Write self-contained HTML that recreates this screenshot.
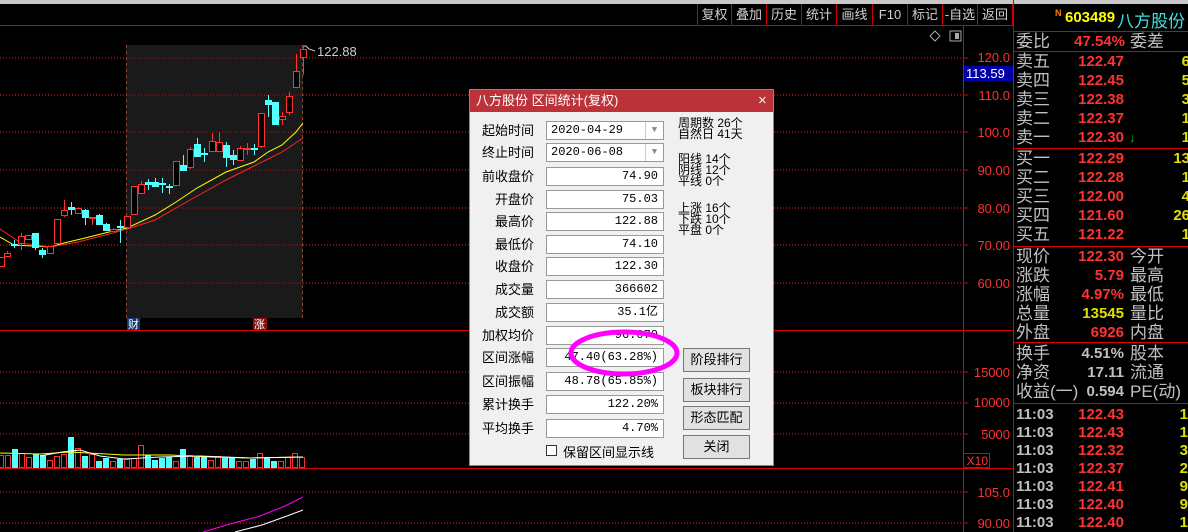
<!DOCTYPE html>
<html><head><meta charset="utf-8"><style>
*{margin:0;padding:0;box-sizing:border-box}
body{width:1188px;height:532px;background:#000;overflow:hidden;position:relative;font-family:"Liberation Sans","Noto Sans CJK SC",sans-serif;color:#c0c0c0}
.a{position:absolute;white-space:nowrap}
.tb{position:absolute;top:4px;height:21px;font-size:13px;line-height:21px;text-align:center;color:#d0d0d0;border-right:1px solid #c00}
.ax{position:absolute;font-size:13px;color:#ff3232;right:178px;text-align:right}
.rp{position:absolute;left:1016px;font-size:17px;line-height:19px;color:#c0c0c0}
.num{position:absolute;font-size:15px;font-weight:bold;line-height:19px;text-align:right;font-family:"Liberation Sans",sans-serif}
.hl{position:absolute;left:1014px;width:174px;height:1px;background:#d00}
.dlg{position:absolute;left:469px;top:89px;width:305px;height:377px;background:#f0f0f0;border:1px solid #888}
.ttl{position:absolute;left:0;top:0;width:303px;height:22px;background:#bb3239;color:#fff;font-size:13px;line-height:22px;padding-left:6px}
.lb{position:absolute;width:64px;text-align:right;font-size:13px;color:#000;left:0}
.in{position:absolute;left:76px;width:118px;height:19px;background:#fff;border:1px solid #999;font-size:12px;color:#000;text-align:right;padding-right:5px;line-height:17px;font-family:"Liberation Mono",monospace}
.bt{position:absolute;left:213px;width:67px;height:24px;background:#e1e1e1;border:1px solid #777;font-size:13px;color:#000;text-align:center;line-height:22px}
.st{position:absolute;font-size:12px;line-height:11px;color:#000}
</style></head><body>
<div class="a" style="left:0;top:0;width:1188px;height:4px;background:#c8c8c8"></div>
<div class="a" style="left:0;top:25px;width:1014px;height:1px;background:#c00"></div>
<div class="tb" style="left:697px;width:35px;border-left:1px solid #c00">复权</div>
<div class="tb" style="left:732px;width:35px">叠加</div>
<div class="tb" style="left:767px;width:35px">历史</div>
<div class="tb" style="left:802px;width:35px">统计</div>
<div class="tb" style="left:837px;width:36px">画线</div>
<div class="tb" style="left:873px;width:35px">F10</div>
<div class="tb" style="left:908px;width:35px">标记</div>
<div class="tb" style="left:943px;width:35px">-自选</div>
<div class="tb" style="left:978px;width:35px">返回</div>

<svg class="a" style="left:0;top:0" width="1014" height="532">
<rect x="126" y="45" width="177" height="273" fill="#1a1a1a"/>
<g stroke="#7a1010" stroke-dasharray="1,2" stroke-width="2">
<line x1="0" y1="58" x2="963" y2="58"/><line x1="0" y1="95" x2="963" y2="95"/><line x1="0" y1="132" x2="963" y2="132"/><line x1="0" y1="170" x2="963" y2="170"/><line x1="0" y1="208" x2="963" y2="208"/><line x1="0" y1="245" x2="963" y2="245"/><line x1="0" y1="283" x2="963" y2="283"/>
<line x1="0" y1="372" x2="963" y2="372"/><line x1="0" y1="403" x2="963" y2="403"/><line x1="0" y1="434" x2="963" y2="434"/><line x1="0" y1="492" x2="963" y2="492"/><line x1="0" y1="523" x2="963" y2="523"/>
</g>
<g stroke="#a04020" stroke-dasharray="3,3"><line x1="126.5" y1="45" x2="126.5" y2="318"/><line x1="302.5" y1="45" x2="302.5" y2="318"/></g>
<line x1="0" y1="330.5" x2="1014" y2="330.5" stroke="#d00"/>
<line x1="0" y1="468.5" x2="1014" y2="468.5" stroke="#d00"/>
<line x1="963.5" y1="26" x2="963.5" y2="532" stroke="#d00"/>
<line x1="1013.5" y1="0" x2="1013.5" y2="532" stroke="#d00"/>
<g stroke="#d00"><line x1="963" y1="58" x2="968" y2="58"/><line x1="963" y1="95" x2="968" y2="95"/><line x1="963" y1="132" x2="968" y2="132"/><line x1="963" y1="170" x2="968" y2="170"/><line x1="963" y1="208" x2="968" y2="208"/><line x1="963" y1="245" x2="968" y2="245"/><line x1="963" y1="283" x2="968" y2="283"/><line x1="963" y1="372" x2="968" y2="372"/><line x1="963" y1="403" x2="968" y2="403"/><line x1="963" y1="434" x2="968" y2="434"/><line x1="963" y1="492" x2="968" y2="492"/><line x1="963" y1="523" x2="968" y2="523"/></g>
<rect x="963.5" y="453.5" width="26" height="14" fill="none" stroke="#d00"/>
<polyline fill="none" stroke="#ffff00" points="0,237 14,245 50,247 64,243 85,238 113,231 127,228 155,215 176,202 197,188 226,172 254,162 268,152 282,145 296,132 303,123"/>
<polyline fill="none" stroke="#f22" points="0,229 21,243 50,247 78,242 113,233 127,229 155,220 190,200 226,180 254,166 282,152 303,138"/>
<g id="cd"></g>
<g id="vol"></g>
<polyline fill="none" stroke="#ff00ff" points="203,532 230,524 260,516 285,506 303,497"/>
<polyline fill="none" stroke="#fff" points="235,532 262,525 287,516 303,510"/>
<rect x="127" y="318" width="13" height="12" fill="#103a70"/>
<rect x="253" y="318" width="14" height="12" fill="#8a1010"/>
<text x="128" y="328" font-size="11" fill="#fff" font-family="Noto Sans CJK SC">财</text>
<text x="254" y="328" font-size="11" fill="#fff" font-family="Noto Sans CJK SC">涨</text>
<polyline fill="none" stroke="#ccc" points="303,46 306,46 309,49 315,51"/>
<text x="317" y="56" font-size="13" fill="#ccc">122.88</text>
<path d="M935 31 L940 36 L935 41 L930 36Z" fill="none" stroke="#aaa"/>
<rect x="950" y="31" width="11" height="10" fill="none" stroke="#aaa"/><rect x="955" y="33" width="4" height="6" fill="#aaa"/>
<rect x="964" y="66" width="49" height="15" fill="#0000a8"/>
<text x="966" y="78" font-size="13" fill="#fff">113.59</text>
</svg>
<div class="ax" style="top:50px;right:178px">120.0</div>
<div class="ax" style="top:88px">110.0</div>
<div class="ax" style="top:125px">100.0</div>
<div class="ax" style="top:163px">90.00</div>
<div class="ax" style="top:201px">80.00</div>
<div class="ax" style="top:238px">70.00</div>
<div class="ax" style="top:276px">60.00</div>
<div class="ax" style="top:365px">15000</div>
<div class="ax" style="top:395px">10000</div>
<div class="ax" style="top:427px">5000</div>
<div class="ax" style="top:454px;right:200px;font-size:12px">X10</div>
<div class="ax" style="top:485px">105.0</div>
<div class="ax" style="top:516px">90.00</div>

<div class="a" style="left:1055px;top:8px;font-size:9px;color:#ff8000;font-weight:bold">N</div>
<div class="a" style="left:1065px;top:9px;font-size:15px;color:#ffff00;font-weight:bold">603489</div>
<div class="a" style="left:1117px;top:7px;font-size:17px;color:#40e0e0">八方股份</div>
<div class="hl" style="top:31px"></div>
<div class="rp" style="top:32px">委比</div><div class="num" style="left:1060px;width:65px;top:32px;color:#ff3232">47.54%</div><div class="rp" style="left:1130px;top:32px">委差</div>
<div class="hl" style="top:51px"></div>
<div class="hl" style="top:148px"></div>
<div class="hl" style="top:246px"></div>
<div class="hl" style="top:342px"></div>
<div class="hl" style="top:403px"></div>
<div id="rp"></div>

<div class="dlg">
<div class="ttl">八方股份 区间统计(复权)</div>
<div class="a" style="left:288px;top:2px;color:#eee;font-size:15px;font-weight:normal">×</div>
<div class="lb" style="top:30px">起始时间</div>
<div class="in" style="top:31px;text-align:left;padding-left:4px">2020-04-29<span style="position:absolute;right:0;top:0;width:18px;height:17px;border-left:1px solid #ccc;color:#888;font-size:9px;text-align:center">▼</span></div>
<div class="lb" style="top:52px">终止时间</div>
<div class="in" style="top:53px;text-align:left;padding-left:4px">2020-06-08<span style="position:absolute;right:0;top:0;width:18px;height:17px;border-left:1px solid #ccc;color:#888;font-size:9px;text-align:center">▼</span></div>
<div id="fl"></div>
<div class="st" style="left:208px;top:28px">周期数 26个<br>自然日 41天</div>
<div class="st" style="left:208px;top:64px">阳线 14个<br>阴线 12个<br>平线 0个</div>
<div class="st" style="left:208px;top:113px">上涨 16个<br>下跌 10个<br>平盘 0个</div>
<div class="bt" style="top:258px">阶段排行</div>
<div class="bt" style="top:288px">板块排行</div>
<div class="bt" style="top:316px">形态匹配</div>
<div class="bt" style="top:345px">关闭</div>
<div class="a" style="left:76px;top:355px;width:11px;height:11px;background:#fff;border:1px solid #333"></div>
<div class="a" style="left:93px;top:352px;font-size:13px;color:#000">保留区间显示线</div>
<svg class="a" style="left:97px;top:237px" width="115" height="55"><ellipse cx="57" cy="26" rx="53" ry="21" fill="none" stroke="#f0f" stroke-width="5"/></svg>
</div>

<script>
var C=[[1,257,266,257,266,1],[7,253,256,251,257,1],[14,244,245,240,248,0],[21,236,243,233,250,1],[28,235,239,235,239,1],[35,233,247,233,250,0],[42,250,254,248,258,0],[50,246,253,246,253,1],[57,219,243,219,243,1],[64,210,215,200,217,1],[71,207,209,202,215,0],[78,208,213,207,213,1],[85,210,217,209,225,0],[92,217,218,217,225,1],[99,215,224,214,224,0],[106,224,230,223,230,0],[113,229,231,228,232,1],[120,226,227,220,243,0],[127,216,227,216,227,1],[134,186,214,186,214,1],[141,184,193,181,193,1],[148,182,184,179,190,0],[155,182,186,178,186,0],[162,183,184,178,193,0],[169,186,187,184,194,0],[176,161,185,161,185,1],[183,165,170,155,170,0],[190,149,167,147,169,1],[197,144,156,138,157,0],[204,153,154,148,162,0],[212,141,151,133,152,1],[219,142,151,132,152,1],[226,145,157,142,167,0],[233,155,159,150,165,0],[240,148,160,146,161,1],[247,148,149,143,155,1],[254,148,149,144,155,0],[261,113,146,113,148,1],[268,100,104,95,117,0],[275,102,124,102,124,0],[282,116,119,112,125,1],[289,96,112,92,115,1],[296,71,87,54,87,1],[303,49,57,47,75,1]];
var s='';C.forEach(function(c){var col=c[5]?'#ff3232':'#54ffff';s+='<line x1="'+(c[0]+.5)+'" y1="'+c[3]+'" x2="'+(c[0]+.5)+'" y2="'+c[4]+'" stroke="'+col+'"/>';var h=Math.max(1,c[2]-c[1]);if(c[5])s+='<rect x="'+(c[0]-2.5)+'" y="'+(c[1]+.5)+'" width="6" height="'+h+'" fill="#000" stroke="'+col+'"/>';else s+='<rect x="'+(c[0]-3)+'" y="'+c[1]+'" width="7" height="'+(h+1)+'" fill="'+col+'"/>';});
document.getElementById('cd').innerHTML=s;
var V=[455,455,449,453,457,454,455,460,456,454,437,448,456,454,461,458,461,459,459,458,445,455,460,458,457,461,449,455,457,457,460,456,458,457,461,461,459,453,458,461,461,457,453,457];
s='';V.forEach(function(v,i){var x=i*7,c=C[i]?C[i][5]:1,col=c?'#ff3232':'#54ffff';if(c)s+='<rect x="'+(x-1.5)+'" y="'+(v+.5)+'" width="5" height="'+(467-v)+'" fill="none" stroke="'+col+'"/>';else s+='<rect x="'+(x-2)+'" y="'+v+'" width="6" height="'+(468-v)+'" fill="'+col+'"/>';});
s+='<polyline fill="none" stroke="#ffff00" points="0,453 40,454 70,452 124,455 170,455 210,457 250,458 303,457"/><polyline fill="none" stroke="#fff" points="40,456 62,452 80,450 100,456 124,459 160,457 200,456 250,458 303,457"/>';
document.getElementById('vol').innerHTML=s;
var R=[['卖五','122.47','6',52],['卖四','122.45','5',71],['卖三','122.38','3',90],['卖二','122.37','1',109],['卖一','122.30','1',128],['买一','122.29','13',149],['买二','122.28','1',168],['买三','122.00','4',187],['买四','121.60','26',206],['买五','121.22','1',225]];
s='';R.forEach(function(r){s+='<div class="rp" style="top:'+r[3]+'px">'+r[0]+'</div><div class="num" style="left:1060px;width:64px;top:'+r[3]+'px;color:#ff3232">'+r[1]+'</div><div class="num" style="left:1140px;width:50px;top:'+r[3]+'px;color:#e0e000;text-align:right">'+r[2]+'</div>';});
s+='<div class="a" style="left:1129px;top:130px;color:#0c0;font-size:13px;font-weight:bold">↓</div>';
var Q=[['现价','122.30','今开',247,'#ff3232'],['涨跌','5.79','最高',266,'#ff3232'],['涨幅','4.97%','最低',285,'#ff3232'],['总量','13545','量比',304,'#e0e000'],['外盘','6926','内盘',323,'#ff3232'],['换手','4.51%','股本',344,'#c0c0c0'],['净资','17.11','流通',363,'#c0c0c0'],['收益(一)','0.594','PE(动)',382,'#c0c0c0']];
Q.forEach(function(r){s+='<div class="rp" style="top:'+r[3]+'px">'+r[0]+'</div><div class="num" style="left:1060px;width:64px;top:'+r[3]+'px;color:'+r[4]+'">'+r[1]+'</div><div class="rp" style="left:1130px;top:'+r[3]+'px">'+r[2]+'</div>';});
var T=[['122.43','1'],['122.43','1'],['122.32','3'],['122.37','2'],['122.41','9'],['122.40','9'],['122.40','1']];
T.forEach(function(t,i){var y=405+i*18;s+='<div class="num" style="left:1016px;top:'+y+'px;color:#c0c0c0;text-align:left">11:03</div><div class="num" style="left:1070px;width:54px;top:'+y+'px;color:#ff3232">'+t[0]+'</div><div class="num" style="left:1140px;width:48px;top:'+y+'px;color:#e0e000">'+t[1]+'</div>';});
document.getElementById('rp').innerHTML=s;
var F=[['前收盘价','74.90'],['开盘价','75.03'],['最高价','122.88'],['最低价','74.10'],['收盘价','122.30'],['成交量','366602'],['成交额','35.1亿'],['加权均价','96.070'],['区间涨幅','47.40(63.28%)'],['区间振幅','48.78(65.85%)'],['累计换手','122.20%'],['平均换手','4.70%']];
var Y=[77,100,122,145,167,190,213,236,258,282,305,329];
s='';F.forEach(function(f,i){s+='<div class="lb" style="top:'+(Y[i]-1)+'px">'+f[0]+'</div><div class="in" style="top:'+Y[i]+'px">'+f[1]+'</div>';});
document.getElementById('fl').innerHTML=s;
</script>
</body></html>
